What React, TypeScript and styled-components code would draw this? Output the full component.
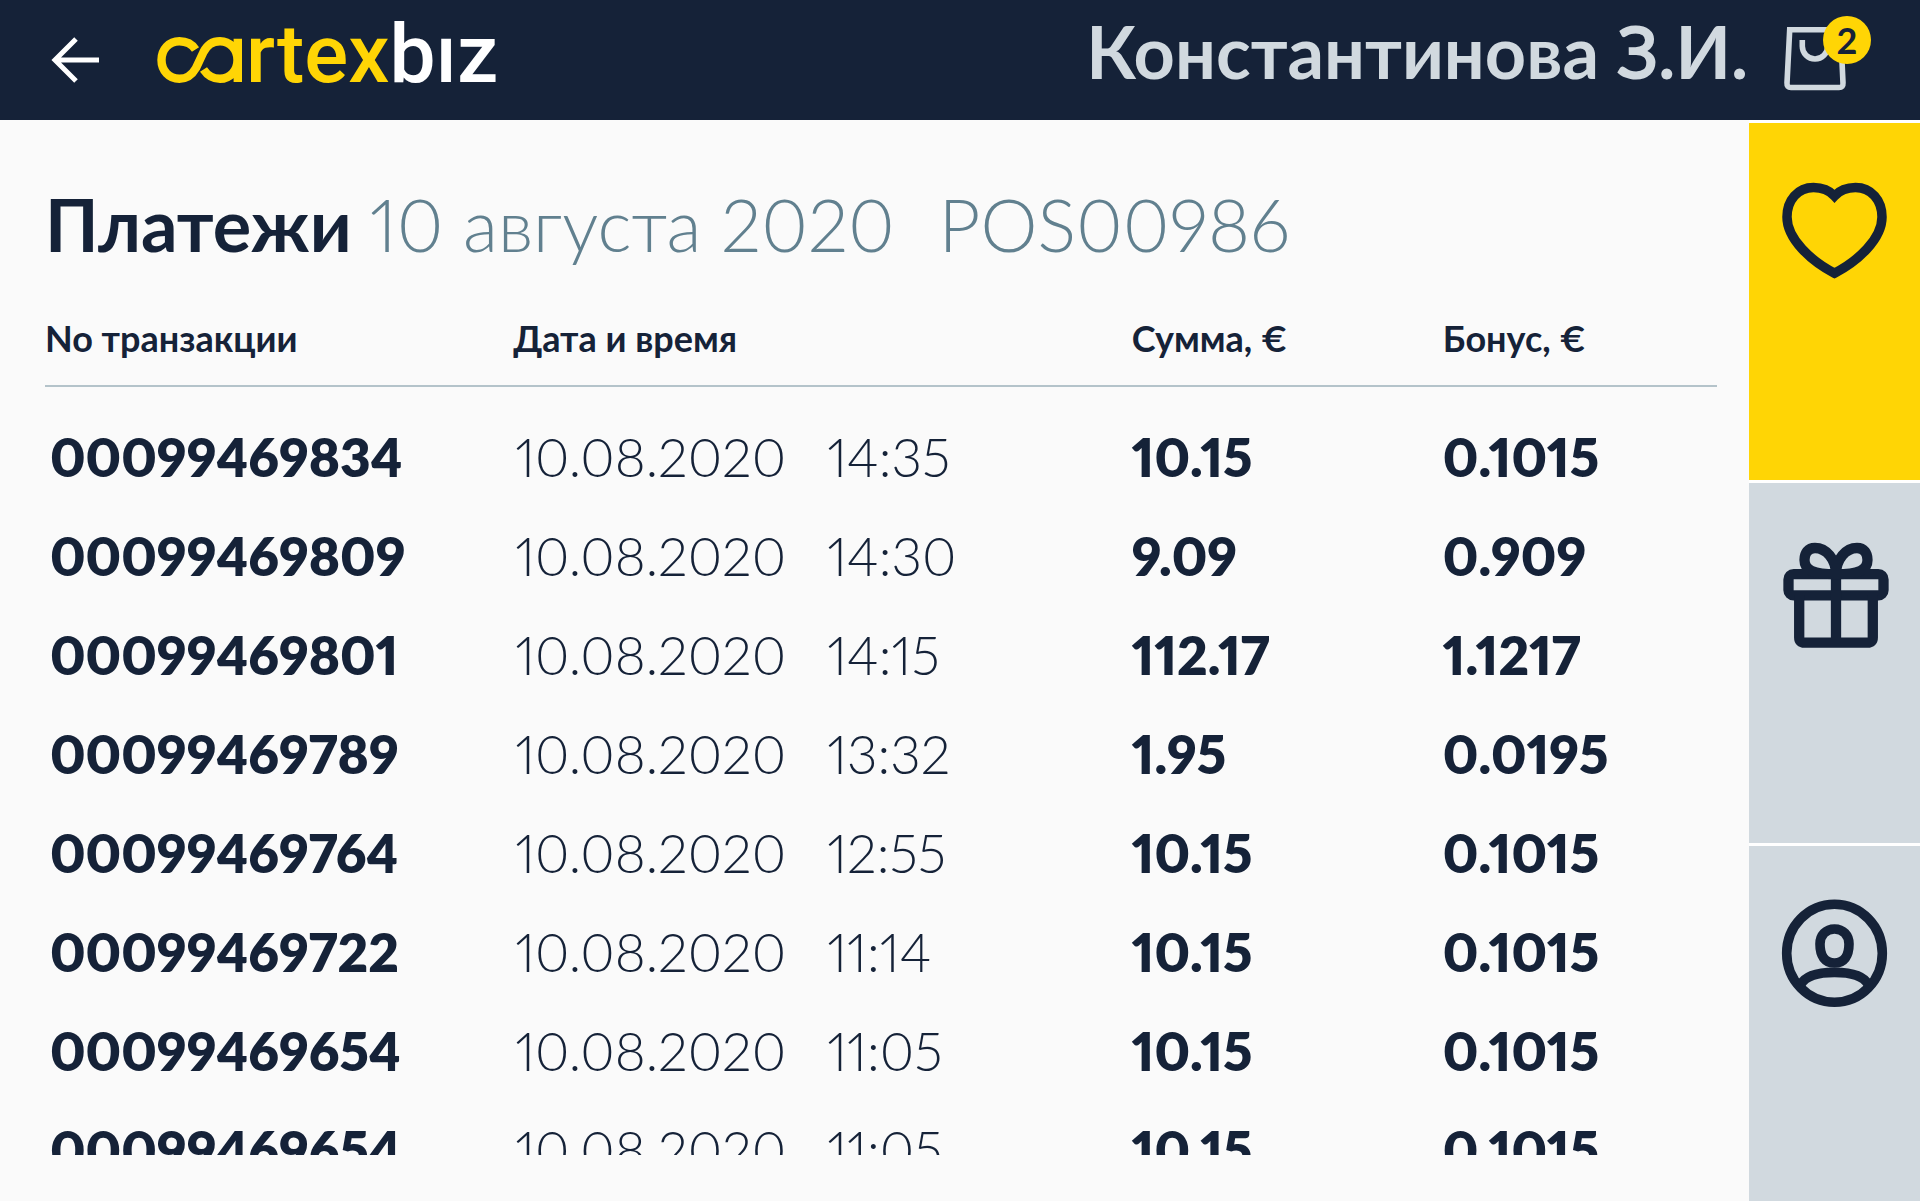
import React from 'react';
import styled, { createGlobalStyle } from 'styled-components';

const navy = '#152238';
const yellow = '#ffd505';
const mist = '#d1d9df';
const paper = '#fafafa';

const GlobalStyle = createGlobalStyle`
  *, *::before, *::after { box-sizing: border-box; }
  body {
    margin: 0;
    background: ${paper};
    color: ${navy};
    font-family: Lato, "Noto Sans", sans-serif;
    font-variant-numeric: proportional-nums;
  }
  svg { display: block; overflow: visible; }
`;

const Page = styled.div`
  display: flex;
  flex-direction: column;
  height: 100vh;
  overflow: hidden;
`;

const Header = styled.header`
  display: flex;
  align-items: center;
  height: 120px;
  padding: 0 48px;
  background: ${navy};
  flex: none;
`;

const IconButton = styled.button`
  display: flex;
  padding: 0;
  border: 0;
  background: none;
  color: inherit;
  cursor: pointer;
`;

const BackButton = styled(IconButton)`
  color: #fff;
`;

const Logo = styled.a`
  display: flex;
  align-items: baseline;
  margin: 0 0 12px 56px;
  gap: 4px;
  color: ${yellow};
  text-decoration: none;
`;

const Wordmark = styled.span`
  font: 500 82px/80px Roboto, sans-serif;
`;

const WordmarkTail = styled.span`
  color: #fff;
`;

const Account = styled.div`
  display: flex;
  align-self: flex-start;
  margin-left: auto;
  padding-top: 16px;
  gap: 36px;
  color: ${mist};
`;

const Customer = styled.div`
  font-size: 72px;
  line-height: 70px;
  font-weight: 700;
  white-space: nowrap;
`;

const BagButton = styled(IconButton)`
  position: relative;
  width: 88px;
  height: 76px;
`;

const Badge = styled.span`
  position: absolute;
  top: 0;
  right: 1px;
  width: 48px;
  height: 48px;
  border-radius: 50%;
  background: ${yellow};
  color: ${navy};
  font: 700 36px/48px Lato, sans-serif;
  text-align: center;
`;

const Body = styled.div`
  display: flex;
  flex: 1;
  min-height: 0;
`;

const Content = styled.main`
  display: flex;
  flex-direction: column;
  flex: 1;
  min-width: 0;
  padding: 52px 32px 46px 45px;
`;

const Title = styled.h1`
  display: flex;
  gap: 44px;
  margin: 0;
  font-size: 72px;
  line-height: 104px;
  font-weight: 700;
  white-space: nowrap;
`;

const TitleMain = styled.span`
  display: flex;
  gap: 18px;
`;

const TitleMeta = styled.span`
  color: #61808f;
  font-weight: 300;
`;

const ScrollArea = styled.div`
  flex: 1;
  min-height: 0;
  margin-top: 28px;
  overflow: hidden;
`;

const Table = styled.table`
  width: 100%;
  border-collapse: separate;
  border-spacing: 0;
  table-layout: fixed;
`;

const HeadCell = styled.th<{ $width: string }>`
  width: ${(p) => p.$width};
  height: 83px;
  padding: 0 0 14px;
  border-bottom: 2px solid #b4c3ca;
  font-size: 36px;
  line-height: 48px;
  font-weight: 700;
  text-align: left;
  white-space: nowrap;
`;

const Cell = styled.td<{ $light?: boolean }>`
  height: 99px;
  padding: 0;
  font-size: 53px;
  line-height: 72px;
  font-weight: ${(p) => (p.$light ? 300 : 800)};
  white-space: nowrap;
`;

const IdCell = styled(Cell)`
  padding-left: 5px;
`;

const FirstGap = styled.tr`
  height: 20px;
`;

const Stamp = styled.div`
  display: grid;
  grid-template-columns: 312px 1fr;
  padding-left: 2px;
`;

const Sidebar = styled.nav`
  display: grid;
  grid-template-rows: 357fr 360fr 355fr;
  gap: 3px;
  width: 171px;
  padding-top: 3px;
  background: #fff;
  flex: none;
`;

const Tile = styled.button<{ $active?: boolean }>`
  display: flex;
  align-items: flex-start;
  justify-content: center;
  padding: 52px 0 0;
  border: 0;
  background: ${(p) => (p.$active ? yellow : mist)};
  color: ${navy};
  cursor: pointer;
`;

const rows = [
  ['00099469834', '10.08.2020', '14:35', '10.15', '0.1015'],
  ['00099469809', '10.08.2020', '14:30', '9.09', '0.909'],
  ['00099469801', '10.08.2020', '14:15', '112.17', '1.1217'],
  ['00099469789', '10.08.2020', '13:32', '1.95', '0.0195'],
  ['00099469764', '10.08.2020', '12:55', '10.15', '0.1015'],
  ['00099469722', '10.08.2020', '11:14', '10.15', '0.1015'],
  ['00099469654', '10.08.2020', '11:05', '10.15', '0.1015'],
  ['00099469654', '10.08.2020', '11:05', '10.15', '0.1015'],
];

const BackIcon = () => (
  <svg width="52" height="48" viewBox="0 0 52 48" fill="none" stroke="currentColor" strokeWidth="5">
    <path d="M28 3 7 24l21 21M7 24h44" />
  </svg>
);

const LogoMark = () => (
  <svg width="86" height="46" viewBox="0 0 86 46" fill="none" stroke="currentColor" strokeWidth="8.4">
    <path d="M39.500 13.500C36 8 30 5.200 23.300 5.200 13 5.200 5.500 13.500 5.500 24S13 42.800 23.300 42.800C31 42.800 36 39 40 32L47.500 16C51 9 56 5.200 64 5.200 74 5.200 81.500 13.500 81.500 24S74 42.800 64 42.800C57 42.800 51.500 39.500 47.500 33.500M81.800 2.700V46" />
  </svg>
);

const BagIcon = () => (
  <svg width="64" height="76" viewBox="0 0 64 76" fill="none" stroke="currentColor" strokeWidth="5.6">
    <path d="M5.700 13.800H56.500L59 67q.3 4.500-4 4.500H7q-4.300 0-4-4.500z" />
    <path d="M18.300 24v6.300a12.700 12.700 0 0 0 25.400 0V24" />
  </svg>
);

const HeartIcon = () => (
  <svg width="111" height="112" viewBox="0 0 111 112" fill="none" stroke="currentColor" strokeWidth="9.500">
    <path d="M55.500 21C50 15 43 12.500 34.500 12.500 19 12.500 8 25 8 42c0 22 24 44 47.500 56.200C79 86 103 64 103 42c0-17-11-29.500-26.500-29.500C68 12.500 61 15 55.500 21z" />
  </svg>
);

const GiftIcon = () => (
  <svg width="111" height="114" viewBox="0 0 111 114" fill="none" stroke="currentColor" strokeWidth="10.300">
    <rect x="9.500" y="39.200" width="95" height="21.200" rx="5.200" />
    <path d="M20.200 60v42.500q0 5.200 5.200 5.200h63.200q5.200 0 5.200-5.200V60M57 36v71" />
    <path d="M57 39.200C57 24 47 13 36 13c-7 0-10.500 5-10.500 12 0 10 8.500 14.200 31.500 14.200C57 24 67 13 78 13c7 0 10.500 5 10.500 12 0 10-8.500 14.200-31.500 14.200" />
  </svg>
);

const UserIcon = () => (
  <svg width="111" height="112" viewBox="0 0 111 112" fill="none" stroke="currentColor" strokeWidth="9.600">
    <ellipse cx="55.500" cy="55.200" rx="47.800" ry="49" />
    <path d="M55.500 31C64 31 70 37 70 46c0 12-5 19-14.500 19S41 58 41 46c0-9 6-15 14.500-15z" />
    <path d="M21.500 87c4.500-9 17.500-12.600 34-12.600S85 78 89.500 87" />
  </svg>
);

export default function App() {
  return (
    <Page>
      <GlobalStyle />
      <Header>
        <BackButton type="button" aria-label="Назад"><BackIcon /></BackButton>
        <Logo href="#">
          <LogoMark />
          <Wordmark>rtex<WordmarkTail>bız</WordmarkTail></Wordmark>
        </Logo>
        <Account>
          <Customer>Константинова З.И.</Customer>
          <BagButton type="button" aria-label="Корзина">
            <BagIcon />
            <Badge>2</Badge>
          </BagButton>
        </Account>
      </Header>
      <Body>
        <Content>
          <Title>
            <TitleMain>
              Платежи
              <TitleMeta>10 августа 2020</TitleMeta>
            </TitleMain>
            <TitleMeta>POS00986</TitleMeta>
          </Title>
          <ScrollArea>
            <Table>
              <thead>
                <tr>
                  <HeadCell $width="28%">No транзакции</HeadCell>
                  <HeadCell $width="37%">Дата и время</HeadCell>
                  <HeadCell $width="18.6%">Сумма, €</HeadCell>
                  <HeadCell $width="16.4%">Бонус, €</HeadCell>
                </tr>
              </thead>
              <tbody>
                <FirstGap aria-hidden="true" />
                {rows.map(([id, date, time, sum, bonus], i) => (
                  <tr key={i}>
                    <IdCell>{id}</IdCell>
                    <Cell $light><Stamp><span>{date}</span><span>{time}</span></Stamp></Cell>
                    <Cell>{sum}</Cell>
                    <Cell>{bonus}</Cell>
                  </tr>
                ))}
              </tbody>
            </Table>
          </ScrollArea>
        </Content>
        <Sidebar>
          <Tile type="button" $active aria-label="Избранное"><HeartIcon /></Tile>
          <Tile type="button" aria-label="Подарки"><GiftIcon /></Tile>
          <Tile type="button" aria-label="Профиль"><UserIcon /></Tile>
        </Sidebar>
      </Body>
    </Page>
  );
}
